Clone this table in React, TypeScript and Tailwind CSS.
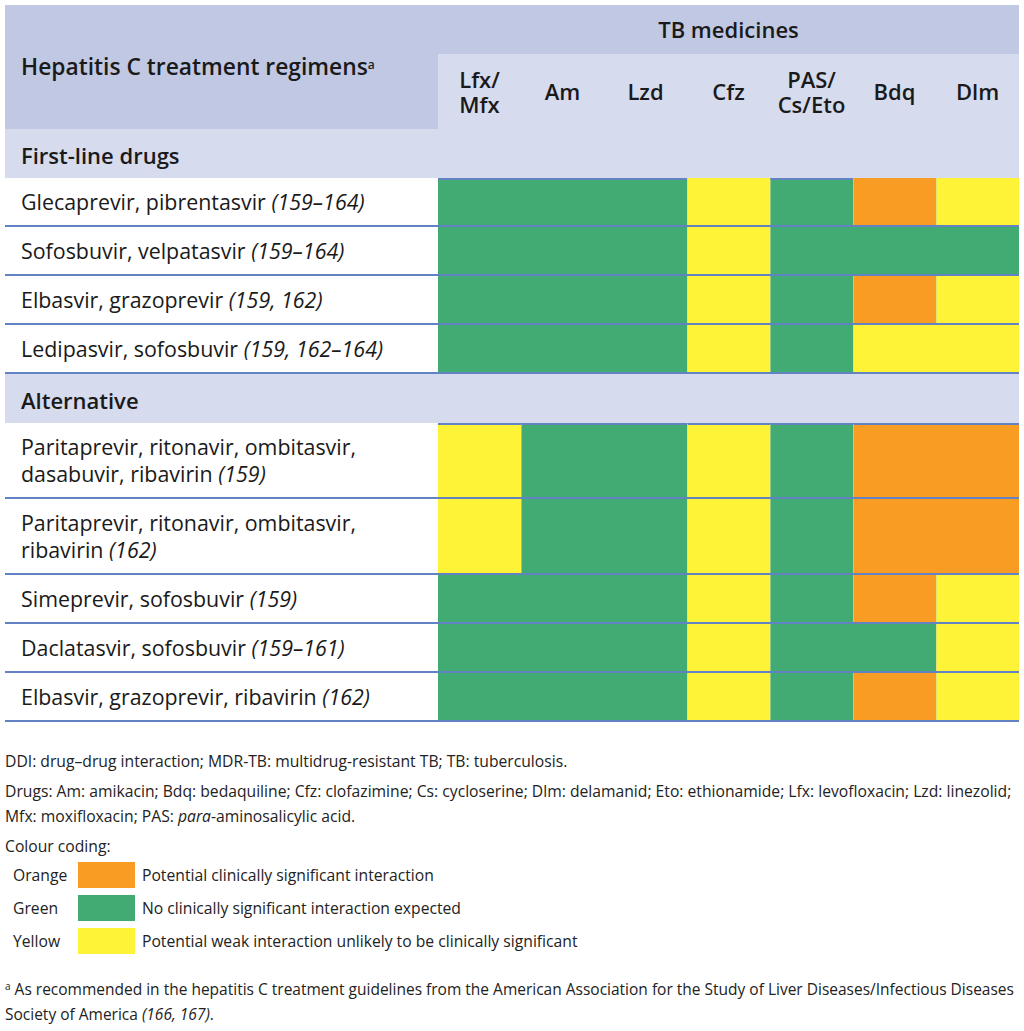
const G = 'bg-[#41ab73]';
const Y = 'bg-[#fff337]';
const O = 'bg-[#f89c23]';

type Cell = { c: string; span: number };
type Row = { name: string; refs: string; two?: boolean; cells: Cell[]; top?: 'green' | 'all' };

const g = (span = 1): Cell => ({ c: G, span });
const y = (span = 1): Cell => ({ c: Y, span });
const o = (span = 1): Cell => ({ c: O, span });

const spanClass: Record<number, string> = {
    1: 'col-span-1',
    2: 'col-span-2',
    3: 'col-span-3',
};

const firstLine: Row[] = [
    { name: 'Glecaprevir, pibrentasvir', refs: '(159–164)', cells: [g(3), y(), g(), o(), y()], top: 'green' },
    { name: 'Sofosbuvir, velpatasvir', refs: '(159–164)', cells: [g(3), y(), g(3)] },
    { name: 'Elbasvir, grazoprevir', refs: '(159, 162)', cells: [g(3), y(), g(), o(), y()] },
    { name: 'Ledipasvir, sofosbuvir', refs: '(159, 162–164)', cells: [g(3), y(), g(), y(2)] },
];

const alternative: Row[] = [
    {
        name: 'Paritaprevir, ritonavir, ombitasvir,\ndasabuvir, ribavirin',
        refs: '(159)',
        two: true,
        cells: [y(), g(2), y(), g(), o(2)],
        top: 'all',
    },
    {
        name: 'Paritaprevir, ritonavir, ombitasvir,\nribavirin',
        refs: '(162)',
        two: true,
        cells: [y(), g(2), y(), g(), o(2)],
    },
    { name: 'Simeprevir, sofosbuvir', refs: '(159)', cells: [g(3), y(), g(), o(), y()] },
    { name: 'Daclatasvir, sofosbuvir', refs: '(159–161)', cells: [g(3), y(), g(2), y()] },
    { name: 'Elbasvir, grazoprevir, ribavirin', refs: '(162)', cells: [g(3), y(), g(), o(), y()] },
];

const medicines = ['Lfx/\nMfx', 'Am', 'Lzd', 'Cfz', 'PAS/\nCs/Eto', 'Bdq', 'Dlm'];

function DataRow({ row }: { row: Row }) {
    const lines = row.name.split('\n');
    return (
        <div
            className={`grid grid-cols-[433px_581px] border-b-2 border-[#6282c4] ${row.two ? 'h-[76px]' : 'h-[49px]'}`}
        >
            <div className="flex flex-col justify-center whitespace-nowrap pl-4 leading-[27px]">
                {lines.map((line, i) => (
                    <div key={i}>
                        {line}
                        {i === lines.length - 1 && <i> {row.refs}</i>}
                    </div>
                ))}
            </div>
            <div className="grid grid-cols-7">
                {row.cells.map((cell, i) => {
                    const line =
                        row.top === 'all' || (row.top === 'green' && cell.c === G)
                            ? 'border-t-2 border-t-[#6282c4]'
                            : '';
                    return (
                        <div
                            key={i}
                            className={`${cell.c} ${spanClass[cell.span]} ${line} ${i > 0 ? 'border-l border-l-[#c9dc9a]/60' : ''}`}
                        />
                    );
                })}
            </div>
        </div>
    );
}

function Section({ title, rows }: { title: string; rows: Row[] }) {
    return (
        <>
            <div className="flex h-[49px] items-center bg-[#d6dbee] pl-4 pt-1 text-[22px] font-semibold">{title}</div>
            {rows.map((row) => (
                <DataRow key={row.name} row={row} />
            ))}
        </>
    );
}

const legend = [
    { label: 'Orange', c: O, text: 'Potential clinically significant interaction' },
    { label: 'Green', c: G, text: 'No clinically significant interaction expected' },
    { label: 'Yellow', c: Y, text: 'Potential weak interaction unlikely to be clinically significant' },
];

export default function App() {
    return (
        <div className="h-[1031px] w-[1024px] overflow-hidden bg-white px-[5px] pt-[5px] font-['Open_Sans',sans-serif] text-[#1a1a1a]">
            <div className="w-[1014px] text-[21.4px]">
                <div className="grid grid-cols-[433px_581px] bg-[#c1c8e4] text-[22px] font-semibold">
                    <div className="row-span-2 flex h-[124px] items-center pl-4">
                        <span className="text-[22.8px]">
                            Hepatitis C treatment regimens
                            <sup className="text-[12px]">a</sup>
                        </span>
                    </div>
                    <div className="flex h-[49px] items-center justify-center">TB medicines</div>
                    <div className="grid h-[75px] grid-cols-7 bg-[#d6dbee]">
                        {medicines.map((m) => (
                            <div
                                key={m}
                                className="flex items-center justify-center whitespace-pre-line text-center leading-[25px]"
                            >
                                {m}
                            </div>
                        ))}
                    </div>
                </div>
                <Section title="First-line drugs" rows={firstLine} />
                <Section title="Alternative" rows={alternative} />
            </div>

            <div className="whitespace-nowrap text-[15.7px] leading-[25px] text-[#222]">
                <p className="mt-[27px]">DDI: drug–drug interaction; MDR-TB: multidrug-resistant TB; TB: tuberculosis.</p>
                <p className="mt-[5px]">
                    Drugs: Am: amikacin; Bdq: bedaquiline; Cfz: clofazimine; Cs: cycloserine; Dlm: delamanid; Eto:
                    ethionamide; Lfx: levofloxacin; Lzd: linezolid;
                    <br />
                    Mfx: moxifloxacin; PAS: <i>para</i>-aminosalicylic acid.
                </p>
                <p className="mt-[5px]">Colour coding:</p>
                <div className="mt-[3px] flex flex-col gap-[7px] pl-[8px]">
                    {legend.map((l) => (
                        <div key={l.label} className="flex h-[26px] items-center">
                            <span className="w-[65px]">{l.label}</span>
                            <span className={`h-[26px] w-[57px] ${l.c}`} />
                            <span className="ml-[7px]">{l.text}</span>
                        </div>
                    ))}
                </div>
                <p className="mt-[23px] text-[15.5px]">
                    <sup className="text-[10px]">a</sup> As recommended in the hepatitis C treatment guidelines from the
                    American Association for the Study of Liver Diseases/Infectious Diseases
                    <br />
                    Society of America <i>(166, 167)</i>.
                </p>
            </div>
        </div>
    );
}
